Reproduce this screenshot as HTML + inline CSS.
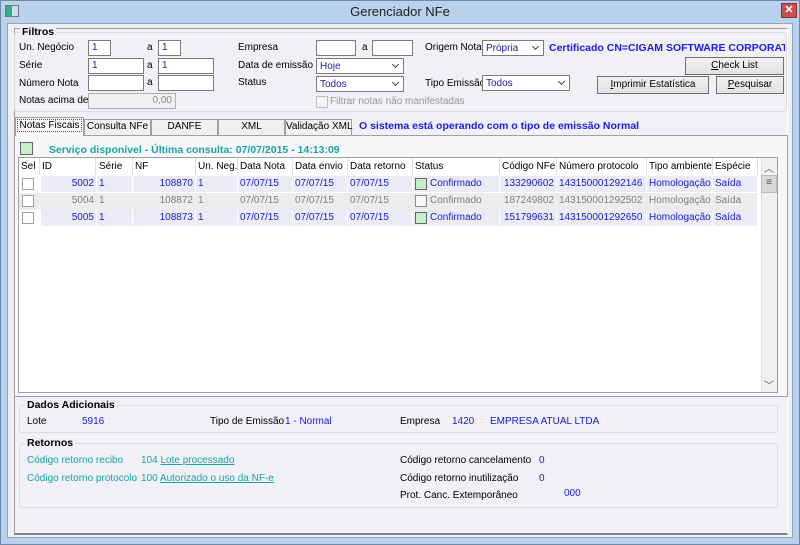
<!DOCTYPE html>
<html><head><meta charset="utf-8"><style>
*{box-sizing:border-box;margin:0;padding:0}
body{width:800px;height:545px;overflow:hidden;background:#b7cfe8;font-family:"Liberation Sans",sans-serif;font-size:10px;color:#000;position:relative}
.a{position:absolute;white-space:nowrap}
.frame{position:absolute;left:0;top:0;width:800px;height:545px;border:1px solid #6f8aa8;background:#b9d1ea}
.body{position:absolute;left:7px;top:23px;width:786px;height:515px;background:#f0f0f0;border:1px solid #8ea6c0}
.panel{position:absolute;left:14px;top:28px;width:774px;height:507px;background:#f0f0f6;border:1px solid #a0a0a0;border-right-color:#fff;border-bottom:2px solid #808080}
.grp{position:absolute;border:1px solid #dcdce4;border-radius:3px}
.in{position:absolute;background:#fff;border:1px solid #7a7a7a;height:16px;color:#2020b0;padding:1px 3px;line-height:12px;white-space:nowrap}
.sel{position:absolute;background:#fff;border:1px solid #7a7a7a;height:16px;color:#2020b0;padding:1px 3px;line-height:13px;white-space:nowrap}
.sel:after{content:"";position:absolute;right:5px;top:3px;width:4px;height:4px;border-right:1px solid #444;border-bottom:1px solid #444;transform:rotate(45deg)}
.btn{position:absolute;background:linear-gradient(#f2f2f2,#e1e1e1);border:1px solid #707070;height:18px;text-align:center;line-height:15px;white-space:nowrap}
.tab{position:absolute;top:119px;height:16px;background:#f0f0f0;border:1px solid #a0a0a0;border-bottom:none;text-align:center;line-height:14px;white-space:nowrap}
.b{color:#1c1ccf}
.g{color:#808080}
.t{color:#18a4a4}
.row{position:absolute;left:19px;height:17px;width:738px;white-space:nowrap}
.c{position:absolute;height:16px;line-height:15px;padding:0 2px;overflow:hidden}
.cb{position:absolute;width:12px;height:12px;border:1px solid #a0a0a0;background:#fff}
.hd{position:absolute;top:0;height:17px;line-height:17px;border-right:1px solid #e0e0e0;padding-left:2px;white-space:nowrap;overflow:hidden}
</style></head><body>
<div class="frame"></div>
<div class="a" style="left:5px;top:5px;width:14px;height:12px;border:1px solid #777;background:linear-gradient(90deg,#3a8 0,#3a8 50%,#cde 50%)"></div>
<div class="a" style="left:0;top:4px;width:800px;text-align:center;font-size:13px;color:#222">Gerenciador NFe</div>
<div class="a" style="left:781px;top:3px;width:16px;height:15px;background:#c75050;border:1px solid #8a3030;color:#fff;font-weight:bold;font-size:11px;text-align:center;line-height:13px">✕</div>
<div class="body"></div>
<div class="panel"></div>

<div class="grp" style="left:14px;top:32px;width:773px;height:80px"></div>
<div class="a" style="left:20px;top:26px;font-weight:bold;font-size:10.5px;background:#f0f0f6;padding:0 2px">Filtros</div>
<div class="a" style="left:19px;top:42px">Un. Negócio</div>
<div class="a" style="left:19px;top:60px">Série</div>
<div class="a" style="left:19px;top:78px">Número Nota</div>
<div class="a" style="left:19px;top:95px">Notas acima de</div>
<div class="in" style="left:88px;top:40px;width:23px">1</div>
<div class="a" style="left:147px;top:42px">a</div>
<div class="in" style="left:158px;top:40px;width:23px">1</div>
<div class="in" style="left:88px;top:58px;width:56px">1</div>
<div class="a" style="left:147px;top:60px">a</div>
<div class="in" style="left:158px;top:58px;width:56px">1</div>
<div class="in" style="left:88px;top:75px;width:56px"></div>
<div class="a" style="left:147px;top:77px">a</div>
<div class="in" style="left:158px;top:75px;width:56px"></div>
<div class="in" style="left:88px;top:93px;width:88px;background:#f0f0f0;border-color:#b0b0b0;color:#888;text-align:right">0,00</div>

<div class="a" style="left:238px;top:42px">Empresa</div>
<div class="a" style="left:238px;top:60px">Data de emissão</div>
<div class="a" style="left:238px;top:77px">Status</div>
<div class="in" style="left:316px;top:40px;width:40px"></div>
<div class="a" style="left:362px;top:42px">a</div>
<div class="in" style="left:372px;top:40px;width:41px"></div>
<div class="sel" style="left:316px;top:58px;width:88px">Hoje</div>
<div class="sel" style="left:316px;top:76px;width:88px">Todos</div>
<div class="a" style="left:316px;top:96px;width:12px;height:12px;border:1px solid #c0c0c0;background:#f4f4f4"></div>
<div class="a" style="left:330px;top:96px;color:#999">Filtrar notas não manifestadas</div>

<div class="a" style="left:425px;top:42px">Origem Nota</div>
<div class="sel" style="left:482px;top:40px;width:62px">Própria</div>
<div class="a" style="left:549px;top:42px;font-weight:bold;color:#1c1cf0;font-size:10.5px;width:236px;overflow:hidden">Certificado CN=CIGAM SOFTWARE CORPORATIV</div>
<div class="btn" style="left:685px;top:57px;width:99px"><u>C</u>heck List</div>
<div class="a" style="left:425px;top:78px">Tipo Emissão</div>
<div class="sel" style="left:482px;top:75px;width:88px">Todos</div>
<div class="btn" style="left:597px;top:76px;width:112px"><u>I</u>mprimir Estatística</div>
<div class="btn" style="left:716px;top:76px;width:68px"><u>P</u>esquisar</div>

<div class="tab" style="left:84px;width:67px">Consulta NFe</div>
<div class="tab" style="left:151px;width:67px">DANFE</div>
<div class="tab" style="left:218px;width:67px">XML</div>
<div class="tab" style="left:285px;width:67px">Validação XML</div>
<div class="tab" style="left:15px;top:117px;width:69px;height:19px;background:#f7f7fa;line-height:16px;z-index:2"><span style="border:1px dotted #555;padding:0 1px">Notas Fiscais</span></div>
<div class="a" style="left:359px;top:120px;font-weight:bold;color:#1c1cf0;font-size:10.5px">O sistema está operando com o tipo de emissão Normal</div>
<div class="a" style="left:14px;top:135px;width:774px;height:262px;border:1px solid #a0a0a0;background:#f7f7fa"></div>

<div class="a" style="left:20px;top:142px;width:13px;height:13px;border:1px solid #666;background:#c8f0c8"></div>
<div class="a t" style="left:49px;top:144px;font-weight:bold;font-size:10.5px">Serviço disponível - Última consulta: 07/07/2015 - 14:13:09</div>

<div class="a" style="left:18px;top:157px;width:760px;height:236px;border:1px solid #a0a0a0;background:#fff"></div>
<div class="a" style="left:19px;top:158px;width:742px;height:17px;background:#fff">
<div class="hd" style="left:0;width:21px">Sel</div>
<div class="hd" style="left:21px;width:56px">ID</div>
<div class="hd" style="left:78px;width:36px">Série</div>
<div class="hd" style="left:114px;width:63px">NF</div>
<div class="hd" style="left:177px;width:42px">Un. Neg.</div>
<div class="hd" style="left:219px;width:55px">Data Nota</div>
<div class="hd" style="left:274px;width:55px">Data envio</div>
<div class="hd" style="left:329px;width:65px">Data retorno</div>
<div class="hd" style="left:394px;width:87px">Status</div>
<div class="hd" style="left:481px;width:57px">Código NFe</div>
<div class="hd" style="left:538px;width:90px">Número protocolo</div>
<div class="hd" style="left:628px;width:66px">Tipo ambiente</div>
<div class="hd" style="left:694px;width:45px">Espécie</div>
</div>
<div class="a" style="left:761px;top:158px;width:16px;height:234px;background:#f0f0f0;border-left:1px solid #e0e0e0"></div>
<div class="a" style="left:761px;top:175px;width:16px;height:18px;background:#d8d8d8;border:1px solid #bbb;text-align:center;line-height:14px;color:#555">≡</div>
<div class="a" style="left:764px;top:160px;color:#555;font-size:10px">︿</div>
<div class="a" style="left:764px;top:377px;color:#555;font-size:10px">﹀</div>

<div class="row b" style="top:176px">
<div class="cb" style="left:3px;top:2px"></div>
<div class="c" style="left:22px;width:55px;text-align:right;background:#ebebf5">5002</div>
<div class="c" style="left:78px;width:35px;background:#ebebf5">1</div>
<div class="c" style="left:114px;width:62px;text-align:right;background:#ebebf5">108870</div>
<div class="c" style="left:177px;width:41px;background:#ebebf5">1</div>
<div class="c" style="left:219px;width:54px;background:#ebebf5">07/07/15</div>
<div class="c" style="left:274px;width:54px;background:#ebebf5">07/07/15</div>
<div class="c" style="left:329px;width:64px;background:#ebebf5">07/07/15</div>
<div class="c" style="left:394px;width:86px;background:#ebebf5;padding-left:17px"><span class="cb" style="left:2px;top:2px;background:#c8f0c8;border-color:#666"></span>Confirmado</div>
<div class="c" style="left:481px;width:56px;text-align:right;background:#ebebf5">133290602</div>
<div class="c" style="left:538px;width:89px;background:#ebebf5">143150001292146</div>
<div class="c" style="left:628px;width:65px;background:#ebebf5">Homologação</div>
<div class="c" style="left:694px;width:44px;background:#ebebf5">Saída</div>
</div>
<div class="row g" style="top:193px;background:#ececec">
<div class="cb" style="left:3px;top:2px"></div>
<div class="c" style="left:22px;width:55px;text-align:right">5004</div>
<div class="c" style="left:78px;width:35px">1</div>
<div class="c" style="left:114px;width:62px;text-align:right">108872</div>
<div class="c" style="left:177px;width:41px">1</div>
<div class="c" style="left:219px;width:54px">07/07/15</div>
<div class="c" style="left:274px;width:54px">07/07/15</div>
<div class="c" style="left:329px;width:64px">07/07/15</div>
<div class="c" style="left:394px;width:86px;padding-left:17px"><span class="cb" style="left:2px;top:2px;border-color:#888;background:#f8f8f8"></span>Confirmado</div>
<div class="c" style="left:481px;width:56px;text-align:right">187249802</div>
<div class="c" style="left:538px;width:89px">143150001292502</div>
<div class="c" style="left:628px;width:65px">Homologação</div>
<div class="c" style="left:694px;width:44px">Saída</div>
</div>
<div class="row b" style="top:210px">
<div class="cb" style="left:3px;top:2px"></div>
<div class="c" style="left:22px;width:55px;text-align:right;background:#ebebf5">5005</div>
<div class="c" style="left:78px;width:35px;background:#ebebf5">1</div>
<div class="c" style="left:114px;width:62px;text-align:right;background:#ebebf5">108873</div>
<div class="c" style="left:177px;width:41px;background:#ebebf5">1</div>
<div class="c" style="left:219px;width:54px;background:#ebebf5">07/07/15</div>
<div class="c" style="left:274px;width:54px;background:#ebebf5">07/07/15</div>
<div class="c" style="left:329px;width:64px;background:#ebebf5">07/07/15</div>
<div class="c" style="left:394px;width:86px;background:#ebebf5;padding-left:17px"><span class="cb" style="left:2px;top:2px;background:#c8f0c8;border-color:#666"></span>Confirmado</div>
<div class="c" style="left:481px;width:56px;text-align:right;background:#ebebf5">151799631</div>
<div class="c" style="left:538px;width:89px;background:#ebebf5">143150001292650</div>
<div class="c" style="left:628px;width:65px;background:#ebebf5">Homologação</div>
<div class="c" style="left:694px;width:44px;background:#ebebf5">Saída</div>
</div>

<div class="grp" style="left:19px;top:405px;width:759px;height:28px"></div>
<div class="a" style="left:25px;top:399px;font-weight:bold;font-size:10.5px;background:#f0f0f6;padding:0 2px">Dados Adicionais</div>
<div class="a" style="left:27px;top:416px">Lote</div>
<div class="a b" style="left:82px;top:416px">5916</div>
<div class="a" style="left:210px;top:416px">Tipo de Emissão</div>
<div class="a b" style="left:285px;top:416px">1 - Normal</div>
<div class="a" style="left:400px;top:416px">Empresa</div>
<div class="a b" style="left:452px;top:416px">1420</div>
<div class="a b" style="left:490px;top:416px">EMPRESA ATUAL LTDA</div>

<div class="grp" style="left:19px;top:443px;width:759px;height:65px"></div>
<div class="a" style="left:25px;top:437px;font-weight:bold;font-size:10.5px;background:#f0f0f6;padding:0 2px">Retornos</div>
<div class="a t" style="left:27px;top:455px">Código retorno recibo</div>
<div class="a t" style="left:141px;top:455px">104 <u>Lote processado</u></div>
<div class="a t" style="left:27px;top:473px">Código retorno protocolo</div>
<div class="a t" style="left:141px;top:473px">100 <u>Autorizado o uso da NF-e</u></div>
<div class="a" style="left:400px;top:455px">Código retorno cancelamento</div>
<div class="a b" style="left:539px;top:455px">0</div>
<div class="a" style="left:400px;top:473px">Código retorno inutilização</div>
<div class="a b" style="left:539px;top:473px">0</div>
<div class="a" style="left:400px;top:490px">Prot. Canc. Extemporâneo</div>
<div class="a b" style="left:564px;top:488px">000</div>
</body></html>
